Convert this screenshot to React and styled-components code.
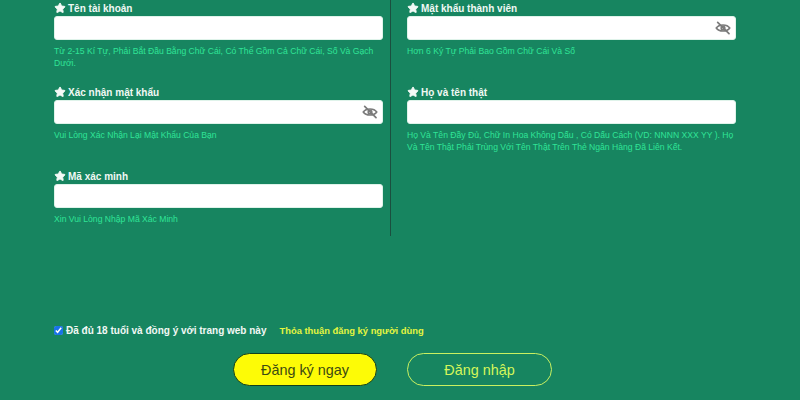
import { Star } from 'lucide-react';
import styled, { createGlobalStyle } from 'styled-components';

const GlobalStyle = createGlobalStyle`
  html, body {
    margin: 0;
    padding: 0;
    background: #178560;
    font-family: "Liberation Sans", Arial, sans-serif;
  }
`;

const Page = styled.div`
  width: 800px;
  height: 400px;
  overflow: hidden;
  background: #178560;
  display: flex;
  flex-direction: column;
`;

const FormGrid = styled.div`
  display: flex;
  height: 236px;
  padding-left: 54px;
`;

const Column = styled.div`
  width: 329px;
  display: flex;
  flex-direction: column;
`;

const Divider = styled.div`
  width: 1px;
  margin: 0 16px 0 7px;
  background: #1b4f3f;
`;

const Field = styled.div`
  flex: 0 0 84px;
  padding-top: 1px;
  box-sizing: border-box;
`;

const Label = styled.div`
  display: flex;
  align-items: center;
  gap: 2px;
  height: 14px;
  margin-bottom: 1px;
  font-size: 10px;
  font-weight: 700;
  color: #f0f8f4;
`;

const InputBox = styled.div`
  position: relative;
  height: 24px;
`;

const Input = styled.input`
  display: block;
  width: 100%;
  height: 100%;
  box-sizing: border-box;
  border: 1px solid #dff3ea;
  border-radius: 3px;
  background: #fff;
  outline: none;
`;

const EyeSvg = styled.svg`
  position: absolute;
  right: 5px;
  top: 5px;
  width: 16px;
  height: 14px;
  fill: none;
  stroke: #7b7b7b;
  stroke-width: 2.6;
  stroke-linecap: round;
`;

const Hint = styled.div`
  margin-top: 5px;
  font-size: 8.6px;
  line-height: 12px;
  color: #30e497;
`;

const Agree = styled.div`
  display: flex;
  align-items: center;
  height: 14px;
  margin-top: 87px;
  padding-left: 54px;
`;

const Check = styled.input`
  width: 9px;
  height: 9px;
  margin: 0 3px 0 0;
  accent-color: #1a73e8;
`;

const AgreeText = styled.span`
  font-size: 10px;
  font-weight: 700;
  color: #f2f8f5;
`;

const AgreeLink = styled.a`
  margin-left: 13px;
  font-size: 9.4px;
  font-weight: 700;
  color: #e4f53f;
`;

const Buttons = styled.div`
  display: flex;
  gap: 30px;
  margin-top: 16px;
  padding-left: 233px;
`;

const Button = styled.button`
  width: ${(p) => (p.$primary ? '144px' : '145px')};
  height: 33px;
  box-sizing: border-box;
  border-radius: 17px;
  font-family: inherit;
  font-size: 14.4px;
  padding: 0;
  border: ${(p) => (p.$primary ? '1.5px solid #123f1c' : '1.5px solid #c9f060')};
  background: ${(p) => (p.$primary ? '#fdfb06' : 'transparent')};
  color: ${(p) => (p.$primary ? '#3c4a12' : '#d4f55a')};
`;

const fieldsLeft = [
  {
    label: 'Tên tài khoản',
    hint: 'Từ 2-15 Kí Tự, Phải Bắt Đầu Bằng Chữ Cái, Có Thể Gồm Cả Chữ Cái, Số Và Gạch Dưới.',
  },
  { label: 'Xác nhận mật khẩu', hint: 'Vui Lòng Xác Nhận Lại Mật Khẩu Của Bạn', eye: true },
  { label: 'Mã xác minh', hint: 'Xin Vui Lòng Nhập Mã Xác Minh' },
];

const fieldsRight = [
  { label: 'Mật khẩu thành viên', hint: 'Hơn 6 Ký Tự Phải Bao Gồm Chữ Cái Và Số', eye: true },
  {
    label: 'Họ và tên thật',
    hint: 'Họ Và Tên Đầy Đủ, Chữ In Hoa Không Dấu , Có Dấu Cách (VD: NNNN XXX YY ). Họ Và Tên Thật Phải Trùng Với Tên Thật Trên Thẻ Ngân Hàng Đã Liên Kết.',
  },
];

const EyeOffIcon = () => (
  <EyeSvg viewBox="0 0 24 21">
    <path d="M2 10.5C6 4.5 18 4.5 22 10.5C18 16.5 6 16.5 2 10.5Z" />
    <circle cx="12" cy="10.5" r="2.6" />
    <path d="M4 2L21 19" />
  </EyeSvg>
);

const FormField = ({ label, hint, eye }) => (
  <Field>
    <Label>
      <Star size={12} fill="#f4faf7" color="#f4faf7" strokeWidth={2} />
      {label}
    </Label>
    <InputBox>
      <Input />
      {eye && <EyeOffIcon />}
    </InputBox>
    <Hint>{hint}</Hint>
  </Field>
);

export default function App() {
  return (
    <Page>
      <GlobalStyle />
      <FormGrid>
        <Column>
          {fieldsLeft.map((f) => (
            <FormField key={f.label} {...f} />
          ))}
        </Column>
        <Divider />
        <Column>
          {fieldsRight.map((f) => (
            <FormField key={f.label} {...f} />
          ))}
        </Column>
      </FormGrid>
      <Agree>
        <Check type="checkbox" defaultChecked />
        <AgreeText>Đã đủ 18 tuổi và đồng ý với trang web này</AgreeText>
        <AgreeLink>Thỏa thuận đăng ký người dùng</AgreeLink>
      </Agree>
      <Buttons>
        <Button $primary>Đăng ký ngay</Button>
        <Button>Đăng nhập</Button>
      </Buttons>
    </Page>
  );
}
